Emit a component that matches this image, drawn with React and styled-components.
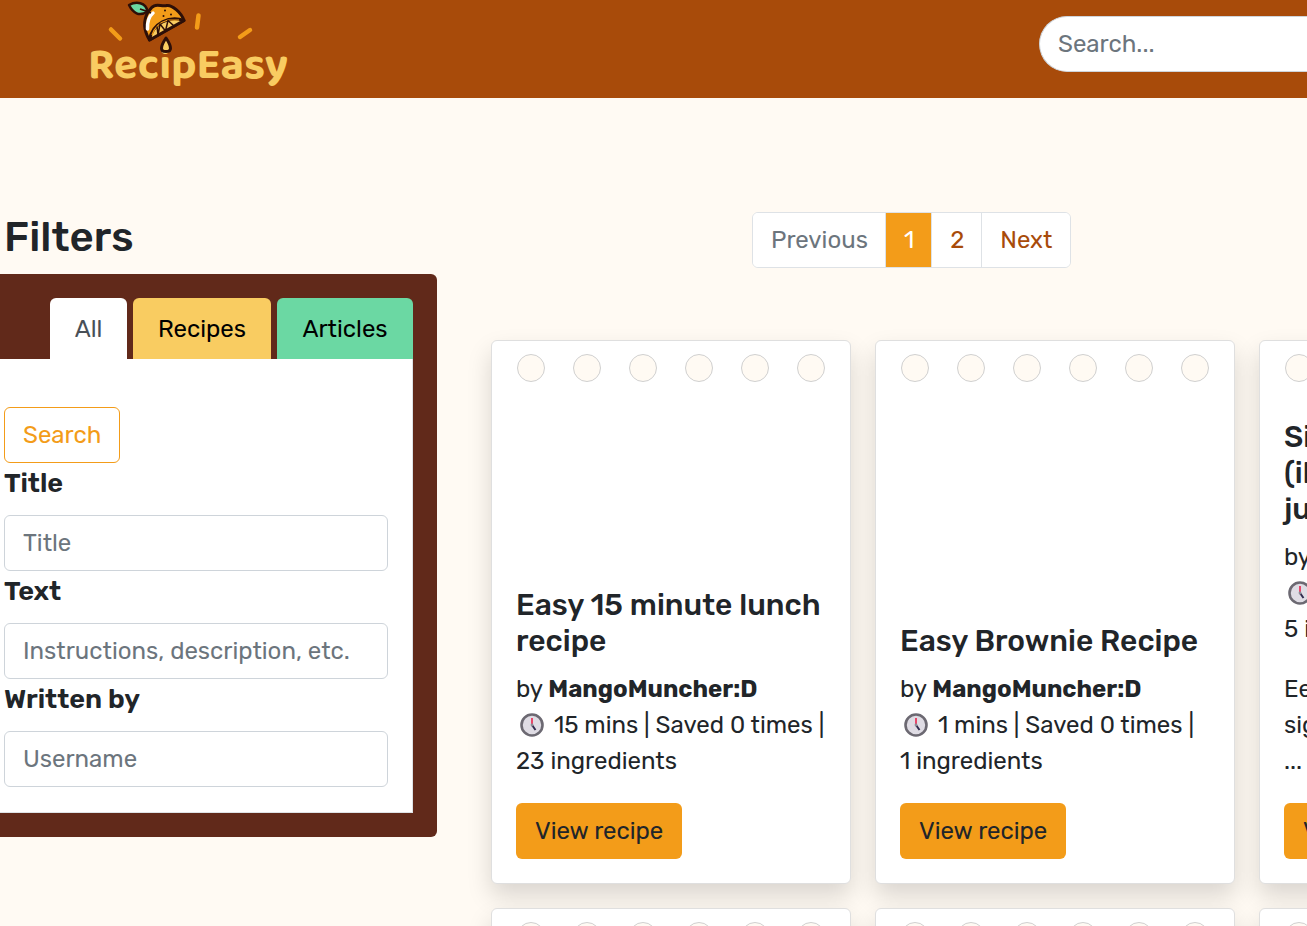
import React from "react";
import styled, { createGlobalStyle } from "styled-components";

const GlobalStyle = createGlobalStyle`
  *, *::before, *::after { box-sizing: border-box; }
  body {
    margin: 0;
    background: #fffaf3;
    color: #212529;
    font-family: Rubik, Roboto, "Liberation Sans", sans-serif;
    font-size: 24px;
    line-height: 36px;
    overflow-x: hidden;
  }
`;

const Page = styled.div`
  min-height: 100vh;
  overflow: hidden;
`;

const Header = styled.header`
  display: flex;
  justify-content: space-between;
  align-items: flex-start;
  height: 98px;
  padding-left: 85px;
  background: #a84b0a;
`;

const LogoLink = styled.a`
  display: block;
  height: 98px;
`;

const SearchForm = styled.form`
  display: flex;
  width: 268px;
  padding-top: 16px;
`;

const Input = styled.input`
  display: block;
  width: 100%;
  height: 56px;
  padding: 0 18px;
  border: 1px solid #ced4da;
  border-radius: 6px;
  background: #fff;
  color: #212529;
  font: inherit;
  &::placeholder { color: #6c757d; opacity: 1; }
`;

const HeaderInput = styled(Input)`
  border-right: 0;
  border-radius: 28px 0 0 28px;
`;

const Main = styled.main`
  display: flex;
  align-items: flex-start;
  gap: 54px;
  padding-top: 114px;
`;

const Sidebar = styled.aside`
  flex: 0 0 437px;
`;

const Heading = styled.h1`
  margin: 0 0 12px;
  padding-left: 4px;
  font-size: 42px;
  line-height: 50px;
  font-weight: 500;
`;

const Panel = styled.section`
  padding: 24px 24px 24px 0;
  border-radius: 0 6px 6px 0;
  background: #61291a;
`;

const Tabs = styled.nav`
  display: flex;
  justify-content: flex-end;
  gap: 6px;
`;

const Tab = styled.button`
  width: ${(p) => p.$width};
  height: 61px;
  padding: 0;
  border: 0;
  border-radius: 6px 6px 0 0;
  background: ${(p) => p.$bg};
  color: ${(p) => p.$color || "#000"};
  font: inherit;
`;

const FilterForm = styled.form`
  padding: 48px 24px 25px 4px;
  border: solid #dee2e6;
  border-width: 0 1px 1px 0;
  background: #fff;
`;

const OutlineButton = styled.button`
  display: block;
  height: 56px;
  padding: 0 18px;
  border: 1px solid #f39c19;
  border-radius: 6px;
  background: #fff;
  color: #f39c19;
  font: inherit;
`;

const Label = styled.label`
  display: block;
  margin-bottom: 12px;
  font-size: 27px;
  line-height: 40px;
  font-weight: 600;
`;

const Results = styled.section`
  flex: 1;
  min-width: 0;
`;

const Pagination = styled.nav`
  display: flex;
  width: max-content;
  height: 56px;
  margin: 0 0 72px 261px;
  border: 1px solid #dee2e6;
  border-radius: 6px;
  background: #fff;
  overflow: hidden;
`;

const PageLink = styled.a`
  padding: 9px 18px;
  color: ${(p) => (p.$active ? "#fff" : p.$disabled ? "#6c757d" : "#a84b0a")};
  background: ${(p) => (p.$active ? "#f39c19" : "#fff")};
  text-decoration: none;
  & + & {
    margin-left: -1px;
    border-left: 1px solid ${(p) => (p.$active ? "#f39c19" : "#dee2e6")};
  }
`;

const Grid = styled.div`
  display: grid;
  grid-template-columns: repeat(3, 360px);
  grid-auto-rows: 544px;
  gap: 24px;
  height: 600px;
`;

const Card = styled.article`
  display: flex;
  flex-direction: column;
  justify-content: space-between;
  padding: 13px 24px 24px;
  border: 1px solid #dfdfdf;
  border-radius: 6px;
  background: #fff;
  box-shadow: 0 12px 24px rgba(0, 0, 0, 0.15);
`;

const Holes = styled.div`
  display: flex;
  justify-content: space-between;
  padding: 0 1px;
`;

const Hole = styled.span`
  width: 28px;
  height: 28px;
  border: 1px solid #d0d0d0;
  border-radius: 50%;
  background: #fffaf3;
`;

const CardTitle = styled.h2`
  margin: 0 0 12px;
  font-size: 30px;
  line-height: 36px;
  font-weight: 500;
  white-space: pre-line;
`;

const Meta = styled.p`
  margin: 0 0 24px;
  white-space: pre-line;
`;

const ClockIcon = styled.svg`
  width: 24px;
  height: 24px;
  margin: 0 4px;
  vertical-align: -4px;
`;

const RecipeButton = styled.a`
  display: block;
  width: max-content;
  height: 56px;
  padding: 10px 19px;
  border-radius: 6px;
  background: #f39c19;
  color: #212529;
  text-decoration: none;
`;

function Logo() {
  return (
    <svg width="210" height="98" viewBox="85 0 210 98" role="img" aria-label="RecipEasy">
      <g fill="none" stroke="#f39c19" strokeWidth="4.500" strokeLinecap="round">
        <path d="M111 29.500L120 38.500" />
        <path d="M198.500 15.500L197 27.500" />
        <path d="M250 30L240 37" />
      </g>
      <path d="M148 12C150 10 151 7 154 6C158 3.500 162 7 167 5.500C172 5 181 12 184 20.500L149.500 40C144 31 143 21 148 12Z" fill="#f39c19" stroke="#2d0f08" strokeWidth="3" strokeLinejoin="round" />
      <path d="M153 13Q147 18 147.500 29" fill="none" stroke="#fff" strokeWidth="3.500" strokeLinecap="round" />
      <path d="M184 20.500C170 15 152 23 149.500 40Z" fill="#f9cc61" stroke="#2d0f08" strokeWidth="3" strokeLinejoin="round" />
      <path d="M152 35C154 28 160 22 168 20L179 20" fill="none" stroke="#f39c19" strokeWidth="1.200" />
      <path d="M157 26.500L158 35M158 35L160 24L165.500 31L168 20.500L174 26" fill="none" stroke="#2d0f08" strokeWidth="1.500" strokeLinejoin="round" />
      <g fill="#2d0f08">
        <circle cx="165" cy="10.500" r="1" />
        <circle cx="171" cy="14.500" r="1" />
        <circle cx="163.500" cy="16" r="1" />
      </g>
      <path d="M147.500 11.500C139 17 133 13 129 5C136 1 146 2 147.500 11.500Z" fill="#6bd8a3" stroke="#2d0f08" strokeWidth="2.500" strokeLinejoin="round" />
      <path d="M140 9L147.500 11.500L151 13" fill="none" stroke="#2d0f08" strokeWidth="1.800" />
      <text x="88" y="78" fontFamily="'Baloo 2', Baloo, Rubik, Lato, sans-serif" fontSize="44" fontWeight="700" fill="#f9cc61">
        RecipEasy
      </text>
      <path d="M166 38C160 47 160 51.500 166 51.500C172 51.500 172 47 166 38Z" fill="#f9cc61" stroke="#2d0f08" strokeWidth="3" strokeLinejoin="round" />
    </svg>
  );
}

function Clock() {
  return (
    <ClockIcon viewBox="0 0 24 24" aria-hidden="true">
      <circle cx="12" cy="12" r="10.500" fill="#dfdce4" stroke="#6c6972" strokeWidth="2.600" />
      <path d="M12 5V12" stroke="#e8476a" strokeWidth="2" />
      <path d="M12 12L15.500 17" stroke="#302b4e" strokeWidth="2" />
      <circle cx="12" cy="12" r="1.400" fill="#8c8995" />
    </ClockIcon>
  );
}

const recipes = [
  { title: "Easy 15 minute lunch recipe", mins: 15, ingredients: 23 },
  { title: "Easy Brownie Recipe", mins: 1, ingredients: 1 },
  { title: "Si\n(il\nju", mins: 15, ingredients: 5, text: "Ee\nsig\n..." },
];

const fields = [
  { id: "title", label: "Title", placeholder: "Title" },
  { id: "text", label: "Text", placeholder: "Instructions, description, etc." },
  { id: "author", label: "Written by", placeholder: "Username" },
];

function RecipeCard({ recipe }) {
  return (
    <Card>
      <Holes>
        {[0, 1, 2, 3, 4, 5].map((n) => <Hole key={n} />)}
      </Holes>
      {recipe && (
        <div>
          <CardTitle>{recipe.title}</CardTitle>
          <Meta>
            by <b>MangoMuncher:D</b>
            <br />
            <Clock /> {recipe.mins} mins | Saved 0 times |{" "}
            {recipe.mins < 10 && <br />}
            {recipe.ingredients} ingredients
          </Meta>
          {recipe.text && <Meta>{recipe.text}</Meta>}
          <RecipeButton href="#recipe">View recipe</RecipeButton>
        </div>
      )}
    </Card>
  );
}

export default function App() {
  return (
    <Page>
      <GlobalStyle />
      <Header>
        <LogoLink href="#home"><Logo /></LogoLink>
        <SearchForm role="search">
          <HeaderInput type="search" aria-label="Search" placeholder="Search..." />
        </SearchForm>
      </Header>
      <Main>
        <Sidebar>
          <Heading>Filters</Heading>
          <Panel>
            <Tabs>
              <Tab $width="77px" $bg="#fff" $color="#495057">All</Tab>
              <Tab $width="138px" $bg="#f9cc61">Recipes</Tab>
              <Tab $width="136px" $bg="#6bd8a3">Articles</Tab>
            </Tabs>
            <FilterForm>
              <OutlineButton type="button">Search</OutlineButton>
              {fields.map((f) => (
                <div key={f.id}>
                  <Label htmlFor={f.id}>{f.label}</Label>
                  <Input id={f.id} type="text" placeholder={f.placeholder} />
                </div>
              ))}
            </FilterForm>
          </Panel>
        </Sidebar>
        <Results>
          <Pagination aria-label="Pages">
            <PageLink href="#previous" $disabled>Previous</PageLink>
            <PageLink href="#1" $active>1</PageLink>
            <PageLink href="#2">2</PageLink>
            <PageLink href="#next">Next</PageLink>
          </Pagination>
          <Grid>
            {recipes.map((r) => <RecipeCard key={r.title} recipe={r} />)}
            <RecipeCard />
            <RecipeCard />
            <RecipeCard />
          </Grid>
        </Results>
      </Main>
    </Page>
  );
}
